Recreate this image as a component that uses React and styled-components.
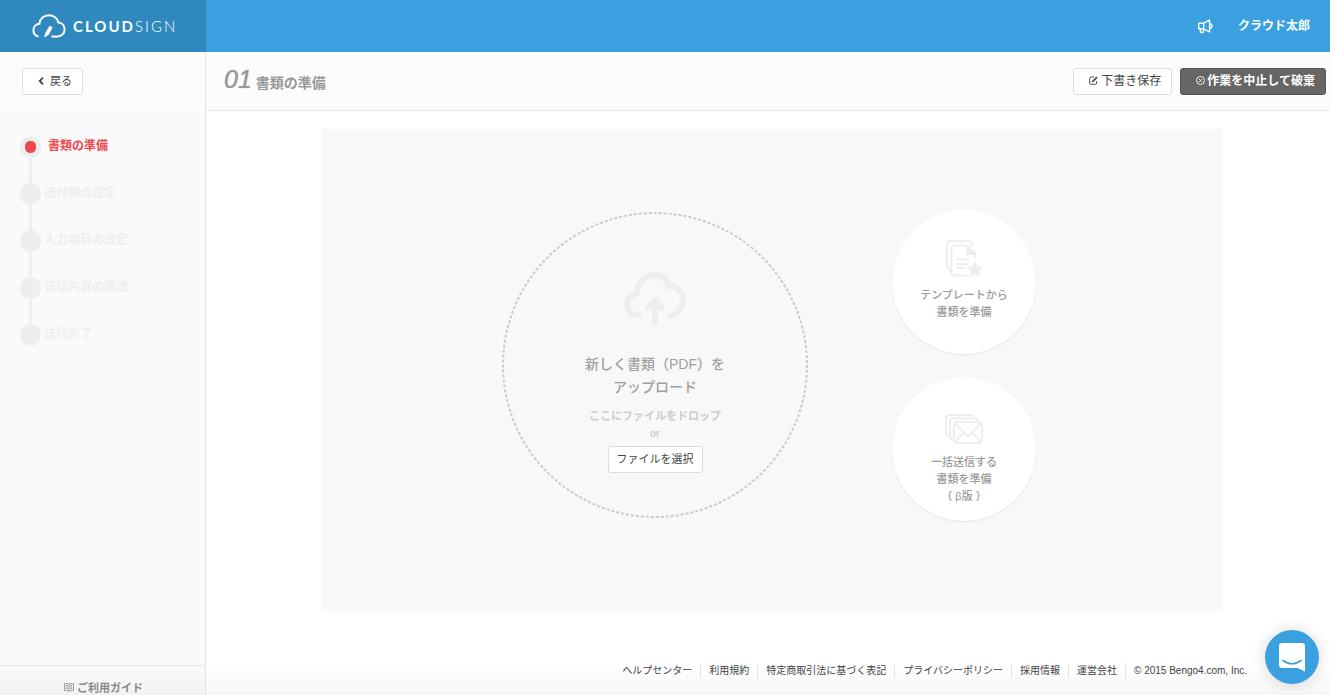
import React from 'react';
import styled, { createGlobalStyle, css } from 'styled-components';

const GlobalStyle = createGlobalStyle`
  * { box-sizing: border-box; }
  body {
    margin: 0;
    background: #fff;
    color: #444;
    font-family: "Liberation Sans", "Noto Sans CJK JP", sans-serif;
    font-size: 12px;
    line-height: 18px;
  }
  button { font-family: inherit; cursor: pointer; }
  a { color: inherit; text-decoration: none; }
  h1, h2, p, ul, ol { margin: 0; padding: 0; font-weight: inherit; }
  ul, ol { list-style: none; }
`;

const Page = styled.div`
  display: grid;
  grid-template-columns: 206px 1fr;
  grid-template-rows: 52px 1fr;
  min-height: 100vh;
`;

const Brand = styled.a`
  display: flex;
  align-items: center;
  gap: 7px;
  padding-left: 32px;
  background: #2f89be;
  color: #fff;
`;

const Wordmark = styled.span`
  font-family: Lato, sans-serif;
  font-size: 15px;
  font-weight: ${(p) => (p.$light ? 300 : 700)};
  letter-spacing: 2px;
  line-height: 20px;
`;

const TopBar = styled.header`
  display: flex;
  align-items: center;
  justify-content: flex-end;
  gap: 24px;
  padding: 0 20px;
  background: #3aa0df;
  color: #fff;
  font-weight: 700;
`;

const IconButton = styled.button`
  display: flex;
  padding: 0;
  border: 0;
  background: none;
  color: inherit;
`;

const Sidebar = styled.aside`
  display: flex;
  flex-direction: column;
  border-right: 1px solid #e6e6e6;
  background: #fafafa;
`;

const SidebarTop = styled.div`
  height: 59px;
  padding: 16px 22px;
  background: #fcfcfc;
`;

const Button = styled.button`
  display: inline-flex;
  align-items: center;
  justify-content: center;
  gap: ${(p) => p.$gap || 2}px;
  height: 27px;
  padding: ${(p) => (p.$icon ? '0 10px 1px 15px' : '0 8px 2px')};
  border: 1px solid #ddd;
  border-radius: 3px;
  background: #fff;
  color: #444;
  font-size: ${(p) => (p.$small ? 11 : 12)}px;
  line-height: 18px;
  white-space: nowrap;
  ${(p) =>
    p.$dark &&
    css`
      border-color: #555;
      background: #666;
      color: #fff;
      font-weight: 700;
    `}
`;

const Steps = styled.ol`
  flex: 1;
  padding: 25px 20px;
`;

const Step = styled.li`
  display: flex;
  gap: ${(p) => (p.$active ? 7 : 3)}px;
  color: ${(p) => (p.$active ? '#ef474f' : '#eee')};
  font-weight: 700;
  line-height: 20px;
`;

const StepRail = styled.div`
  display: flex;
  flex-direction: column;
  align-items: center;
`;

const StepDot = styled.div`
  display: grid;
  place-items: center;
  width: 21px;
  height: 22px;
  border-radius: 11px;
  background: #eee;
`;

const ActiveDot = styled.div`
  width: 11px;
  height: 12px;
  border-radius: 5px;
  background: #ef474f;
`;

const StepLine = styled.div`
  width: 3px;
  height: 25px;
  background: #eee;
`;

const Guide = styled.a`
  display: flex;
  justify-content: center;
  align-items: center;
  gap: 3px;
  height: 30px;
  padding: 14px 0 0 2px;
  border-top: 1px solid #e6e6e6;
  color: #8c8c8c;
  font-size: 11px;
  font-weight: 700;
  line-height: 16px;
`;

const Main = styled.main`
  display: flex;
  flex-direction: column;
  min-width: 0;
`;

const TitleBar = styled.div`
  display: flex;
  align-items: center;
  gap: 8px;
  height: 59px;
  padding: 0 4px 0 18px;
  border-bottom: 1px solid #e6e6e6;
  background: #fcfcfc;
`;

const Title = styled.h1`
  display: flex;
  align-items: baseline;
  gap: 4px;
  flex: 1;
  color: #999;
  font-size: 14px;
  font-weight: 700;
  line-height: 26px;
`;

const StepNumber = styled.span`
  font-size: 25px;
  font-style: italic;
  font-weight: 400;
  text-shadow: 0 0 1px #999;
`;

const Content = styled.div`
  flex: 1;
  padding: 18px 0 0 8px;
`;

const Panel = styled.section`
  display: flex;
  justify-content: center;
  gap: 84px;
  max-width: 900px;
  min-height: 482px;
  margin: 0 auto;
  padding: 81px 6px 81px 0;
  background: #f8f8f8;
  text-align: center;
`;

const DropZone = styled.div`
  position: relative;
  display: flex;
  flex-direction: column;
  align-items: center;
  width: 306px;
  height: 306px;
  margin-top: 2px;
  padding-top: 60px;
  border-radius: 50%;
`;

const DashedRing = styled.svg`
  position: absolute;
  inset: 0;
  pointer-events: none;
`;

const DropTitle = styled.h2`
  margin-top: 27px;
  color: #a0a0a0;
  font-size: 14px;
  font-weight: 500;
  line-height: 23px;
`;

const DropHint = styled.p`
  margin-top: 8px;
  color: #ccc;
  font-size: 11px;
  font-weight: 700;
  line-height: 18px;
`;

const DropOr = styled.p`
  margin-bottom: 3px;
  color: #ccc;
  font-size: 10px;
  font-weight: 700;
  line-height: 18px;
`;

const Choices = styled.div`
  display: flex;
  flex-direction: column;
  gap: 23px;
`;

const Choice = styled.button`
  display: flex;
  flex-direction: column;
  align-items: center;
  gap: 10px;
  width: 144px;
  height: 144px;
  padding: 30px 0 0;
  border: 0;
  border-radius: 50%;
  background: #fff;
  box-shadow: 0 1px 2px rgba(0, 0, 0, 0.08);
  color: #999;
  font-size: 11px;
  font-weight: 500;
  line-height: 17px;
`;

const ChoiceIcon = styled.span`
  display: flex;
  align-items: flex-end;
  height: 37px;
`;

const Footer = styled.footer`
  display: flex;
  justify-content: flex-end;
  padding: 0 83px 17px 0;
  font-size: 10px;
  line-height: 14px;
`;

const FooterList = styled.ul`
  display: flex;
`;

const FooterItem = styled.li`
  padding: 0 8px;
  border-left: ${(p) => (p.$first ? 0 : 1)}px solid #e4e4e4;
  white-space: nowrap;
  &:last-child { padding-right: 0; }
`;

const BottomFade = styled.div`
  position: fixed;
  right: 0;
  bottom: 0;
  left: 0;
  height: 30px;
  background: linear-gradient(rgba(0, 0, 0, 0), rgba(0, 0, 0, 0.03));
  pointer-events: none;
`;

const Launcher = styled.button`
  position: fixed;
  right: 11px;
  bottom: 11px;
  display: grid;
  place-items: center;
  width: 54px;
  height: 54px;
  padding: 0;
  border: 0;
  border-radius: 50%;
  background: #3aa0df;
  box-shadow: 0 1px 16px rgba(0, 0, 0, 0.16);
`;

const CloudLogo = () => (
  <svg width="34" height="24" viewBox="0 0 34 24" fill="none" stroke="#fff" strokeWidth="2" aria-hidden="true">
    <path d="M6.500 22.500C3.200 21.600 1.400 19 1.400 16.200c0-3.600 2.600-6.200 6-6.500C7.900 4.800 12 1.200 17 1.200c4.500 0 8.400 3 9.400 7.400 3.700.3 6.200 3.200 6.200 6.800 0 4-3 7-7 7h-6.100" />
    <path d="M17.200 12.300q.4-.8 1.200-.4l1.500.8q.8.400.4 1.200l-3.500 6.900-3.900 2.400q-.6.200-.6-.5l1-3.700z" fill="#fff" stroke="none" />
  </svg>
);

const MegaphoneIcon = () => (
  <svg width="17" height="16" viewBox="0 0 17 16" fill="none" stroke="currentColor" strokeWidth="1.400" strokeLinejoin="round" aria-hidden="true">
    <path d="M1.700 5.200h5v5.600h-5zM6.700 5.200 12.600 2v12L6.700 10.800M3.400 10.800V13.500q0 1 1 1h1q1 0 1-1v-2.700M13 5.800c2.800.6 2.800 3.800 0 4.400" />
  </svg>
);

const ChevronIcon = () => (
  <svg width="6" height="8" viewBox="0 0 6 8" fill="none" stroke="currentColor" strokeWidth="1.800" aria-hidden="true">
    <path d="M5 .7 1.700 4 5 7.300" />
  </svg>
);

const EditIcon = () => (
  <svg width="10" height="9" viewBox="0 0 10 9" fill="none" stroke="currentColor" strokeWidth=".9" aria-hidden="true">
    <path d="M5 1H2Q.7 1 .7 2.300V7Q.7 8.300 2 8.300h4.500Q7.600 8.300 7.600 7V5" />
    <path d="M3.300 5.900 8 1.200" strokeWidth="1.700" />
  </svg>
);

const CancelIcon = () => (
  <svg width="9" height="9" viewBox="0 0 9 9" fill="none" stroke="currentColor" strokeWidth=".9" aria-hidden="true">
    <circle cx="4.500" cy="4.500" r="4" />
    <path d="m3 3 3 3M6 3 3 6" />
  </svg>
);

const BookIcon = () => (
  <svg width="10" height="9" viewBox="0 0 10 9" fill="none" stroke="currentColor" strokeWidth=".8" aria-hidden="true">
    <path d="M5 1.200C4 .4 2 .3.500.7v7C2 7.300 4 7.500 5 8.400c1-.9 3-1.100 4.500-.7v-7C8 .3 6 .4 5 1.200zv7M1.800 2.500h2M1.800 4h2M1.800 5.500h2M6.200 2.500h2M6.200 4h2M6.200 5.500h2" />
  </svg>
);

const UploadCloudIcon = () => (
  <svg width="62" height="54" viewBox="0 0 62 54" fill="none" stroke="#eee" strokeWidth="6" strokeLinecap="round" strokeLinejoin="round" aria-hidden="true">
    <path d="M14.500 43.600C7.500 43.400 3 38.500 3 32.600c0-5.800 4.200-10.200 10-11C13.300 11.500 20 3 30 3c7.200 0 13 4.200 15.300 11.200C53 13.800 59 20.300 59 28.200c0 8-5.500 14.600-12.300 15.200" />
    <path d="M31 50.500V29M24 35.500l7-7.500 7 7.500" />
  </svg>
);

const TemplateIcon = () => (
  <svg width="37" height="37" viewBox="0 0 37 37" fill="none" stroke="#eee" strokeWidth="2" strokeLinecap="round" strokeLinejoin="round" aria-hidden="true">
    <path d="M5.500 31 3 29Q1 27.500 1 25V4q0-3 3-3h19q3 0 3 3v1.500" />
    <path d="M20.500 35.500H9q-3.500 0-3.500-3.500V9Q5.500 5.500 9 5.500h12l8 8V18" />
    <path d="M11.500 19.500H22M11.500 24H22M11.500 28H18" />
    <path d="m29 22.500 2.200 4.700 5 .6-3.700 3.500 1 5-4.500-2.500-4.500 2.500 1-5-3.700-3.500 5-.6z" fill="#eee" strokeWidth="1" />
    <path d="M21 6v8h8z" fill="#eee" />
  </svg>
);

const EnvelopesIcon = () => (
  <svg width="38" height="30" viewBox="0 0 38 30" fill="none" stroke="#eee" strokeWidth="2" strokeLinejoin="round" aria-hidden="true">
    <path d="M5 21.500H4q-3 0-3-3V4q0-3 3-3h22q3 0 3 2.500" />
    <path d="M9 25.500H8q-3 0-3-3V8q0-3.500 3-3.500h22q3 0 3 3" />
    <rect x="9" y="8" width="28" height="21" rx="3" />
    <path d="m10 9 11 12q2 2 4 0L36 9M10 28l9-10M36 28l-9-10" />
  </svg>
);

const ChatIcon = () => (
  <svg width="26" height="29" viewBox="0 0 26 29" aria-hidden="true">
    <path d="M3 0h20q3 0 3 3v25.500L18.500 25H3q-3 0-3-3V3q0-3 3-3z" fill="#fff" />
    <path d="M4 17.500c5.500 4.300 12.500 4.300 18 0" fill="none" stroke="#3aa0df" strokeWidth="1.600" strokeLinecap="round" />
  </svg>
);

const steps = ['書類の準備', '送付順の設定', '入力項目の設定', '送信内容の確認', '送信完了'];

const footerLinks = [
  'ヘルプセンター',
  '利用規約',
  '特定商取引法に基づく表記',
  'プライバシーポリシー',
  '採用情報',
  '運営会社',
];

export default function App() {
  return (
    <>
      <GlobalStyle />
      <Page>
        <Brand href="#">
          <CloudLogo />
          <div>
            <Wordmark>CLOUD</Wordmark>
            <Wordmark $light>SIGN</Wordmark>
          </div>
        </Brand>
        <TopBar>
          <IconButton aria-label="お知らせ">
            <MegaphoneIcon />
          </IconButton>
          <a href="#">クラウド太郎</a>
        </TopBar>

        <Sidebar>
          <SidebarTop>
            <Button $small $icon $gap={6}>
              <ChevronIcon />
              戻る
            </Button>
          </SidebarTop>
          <Steps>
            {steps.map((label, i) => (
              <Step key={label} $active={i === 0}>
                <StepRail>
                  <StepDot>{i === 0 && <ActiveDot />}</StepDot>
                  {i < steps.length - 1 && <StepLine />}
                </StepRail>
                {label}
              </Step>
            ))}
          </Steps>
          <Guide href="#">
            <BookIcon />
            ご利用ガイド
          </Guide>
        </Sidebar>

        <Main>
          <TitleBar>
            <Title>
              <StepNumber>01</StepNumber>
              書類の準備
            </Title>
            <Button $icon>
              <EditIcon />
              下書き保存
            </Button>
            <Button $icon $dark>
              <CancelIcon />
              作業を中止して破棄
            </Button>
          </TitleBar>
          <Content>
            <Panel>
              <DropZone>
                <DashedRing width="306" height="306" viewBox="0 0 306 306" aria-hidden="true">
                  <circle
                    cx="153"
                    cy="153"
                    r="152"
                    fill="none"
                    stroke="#ccc"
                    strokeWidth="2"
                    pathLength="955"
                    strokeDasharray="3 2"
                  />
                </DashedRing>
                <UploadCloudIcon />
                <DropTitle>
                  新しく書類（PDF）を
                  <br />
                  アップロード
                </DropTitle>
                <DropHint>ここにファイルをドロップ</DropHint>
                <DropOr>or</DropOr>
                <Button $small>ファイルを選択</Button>
              </DropZone>
              <Choices>
                <Choice>
                  <ChoiceIcon>
                    <TemplateIcon />
                  </ChoiceIcon>
                  <span>
                    テンプレートから
                    <br />
                    書類を準備
                  </span>
                </Choice>
                <Choice>
                  <ChoiceIcon>
                    <EnvelopesIcon />
                  </ChoiceIcon>
                  <span>
                    一括送信する
                    <br />
                    書類を準備
                    <br />（ β版 ）
                  </span>
                </Choice>
              </Choices>
            </Panel>
          </Content>
          <Footer>
            <FooterList>
              {footerLinks.map((label, i) => (
                <FooterItem key={label} $first={i === 0}>
                  <a href="#">{label}</a>
                </FooterItem>
              ))}
              <FooterItem>© 2015 Bengo4.com, Inc.</FooterItem>
            </FooterList>
          </Footer>
        </Main>
      </Page>
      <BottomFade />
      <Launcher aria-label="チャットを開く">
        <ChatIcon />
      </Launcher>
    </>
  );
}
